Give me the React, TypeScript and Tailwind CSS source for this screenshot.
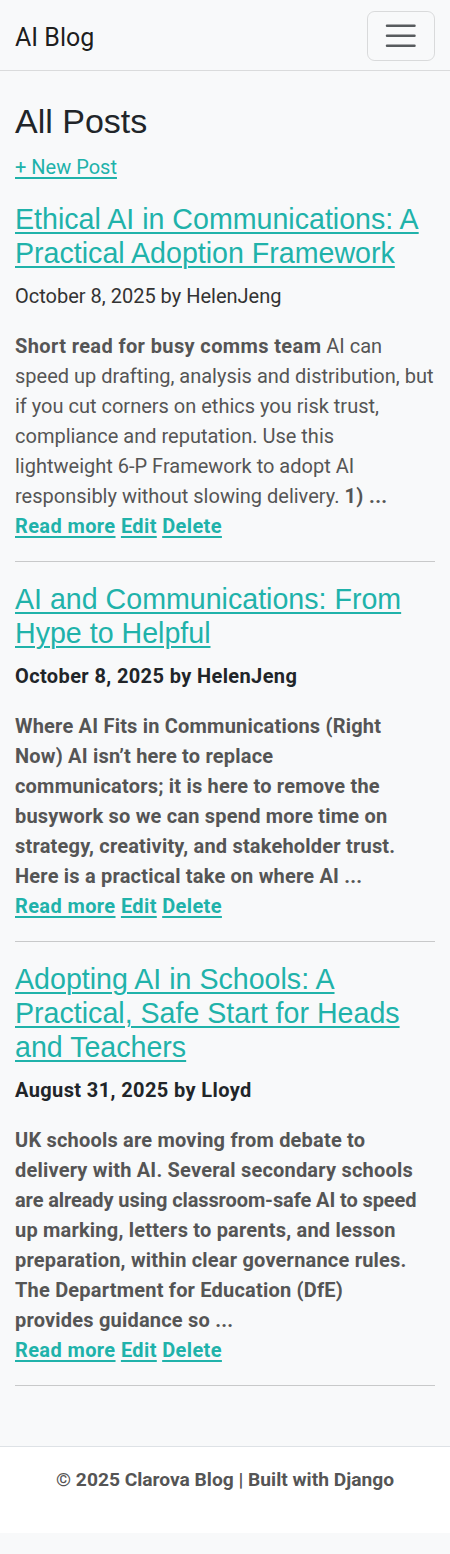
import React from "react";

const sans = "font-['Roboto',sans-serif]";
const head = "font-['Liberation_Sans',Arial,sans-serif]";
const teal = "text-[#20b2aa]";

function Title({ children }: { children: React.ReactNode }) {
  return (
    <h3 className={`${head} text-[28.6px] leading-[34.4px] mb-[10px] font-normal`}>
      <a href="#" className={`${teal} underline decoration-[1.5px] underline-offset-[3px]`}>
        {children}
      </a>
    </h3>
  );
}

function Actions() {
  return (
    <div className={`font-bold tracking-[0.38px] ${teal} leading-[30px]`}>
      <a href="#" className="underline decoration-[2px] underline-offset-[3px]">Read more</a>{" "}
      <a href="#" className="underline decoration-[2px] underline-offset-[3px]">Edit</a>{" "}
      <a href="#" className="underline decoration-[2px] underline-offset-[3px]">Delete</a>
    </div>
  );
}

function Hr() {
  return <hr className="my-[20px] border-0 border-t border-[#c8c9ca]" />;
}

export default function App() {
  return (
    <div className={`min-h-screen bg-[#f8f9fa] ${sans} text-[20px] leading-[30px] text-[#212529]`}>
      <nav className="h-[71px] border-b border-[#dadbdc] px-[15px] flex items-center justify-between">
        <a href="#" className="text-[25px] leading-[37px] text-[rgba(0,0,0,0.9)] mt-[4px]">AI Blog</a>
        <button className="w-[68px] h-[50px] rounded-[7.5px] border border-[rgba(0,0,0,0.12)] flex items-center justify-center mt-[1px]">
          <svg width="37.5" height="37.5" viewBox="0 0 30 30" fill="none">
            <path d="M4 7h22M4 15h22M4 23h22" stroke="rgba(33,37,41,0.75)" strokeWidth="2" strokeLinecap="round" />
          </svg>
        </button>
      </nav>

      <main className="px-[15px] pt-[30px] pb-[40px]">
        <h1 className={`${head} text-[34px] leading-[41px] mb-[10px] font-normal text-[#212529]`}>All Posts</h1>
        <p className="mb-[20px]">
          <a href="#" className={`${teal} underline underline-offset-[3px]`}>+ New Post</a>
        </p>

        <article>
          <Title>Ethical AI in Communications: A Practical Adoption Framework</Title>
          <p className="mb-[20px] text-[#333] mt-[2px]">October 8, 2025 by HelenJeng</p>
          <div className="text-[#555] whitespace-nowrap">
            <strong className="tracking-[0.38px]">Short read for busy comms team</strong> AI can
            <br />
            speed up drafting, analysis and distribution, but
            <br />
            if you cut corners on ethics you risk trust,
            <br />
            compliance and reputation. Use this
            <br />
            lightweight 6-P Framework to adopt AI
            <br />
            responsibly without slowing delivery. <strong className="tracking-[0.38px]">1) ...</strong>
          </div>
          <Actions />
          <Hr />
        </article>

        <article>
          <Title>AI and Communications: From Hype to Helpful</Title>
          <p className="mb-[20px] font-bold tracking-[0.38px] text-[#212529]">October 8, 2025 by HelenJeng</p>
          <div className="text-[#555] font-bold tracking-[0.2px] whitespace-nowrap">
            Where AI Fits in Communications (Right
            <br />
            Now) AI isn’t here to replace
            <br />
            communicators; it is here to remove the
            <br />
            busywork so we can spend more time on
            <br />
            strategy, creativity, and stakeholder trust.
            <br />
            Here is a practical take on where AI ...
          </div>
          <Actions />
          <Hr />
        </article>

        <article>
          <Title>Adopting AI in Schools: A Practical, Safe Start for Heads and Teachers</Title>
          <p className="mb-[20px] font-bold tracking-[0.38px] text-[#212529]">August 31, 2025 by Lloyd</p>
          <div className="text-[#555] font-bold tracking-[0.2px] whitespace-nowrap">
            UK schools are moving from debate to
            <br />
            delivery with AI. Several secondary schools
            <br />
            <span className="tracking-[-0.1px]">are already using classroom-safe AI to speed</span>
            <br />
            up marking, letters to parents, and lesson
            <br />
            preparation, within clear governance rules.
            <br />
            The Department for Education (DfE)
            <br />
            provides guidance so ...
          </div>
          <Actions />
          <Hr />
        </article>
      </main>

      <footer className="bg-white border-t border-[#dee2e6] pt-[18px] pb-[38px] text-center">
        <p className="font-bold text-[19.2px] text-[#555]">© 2025 Clarova Blog | Built with Django</p>
      </footer>
    </div>
  );
}
